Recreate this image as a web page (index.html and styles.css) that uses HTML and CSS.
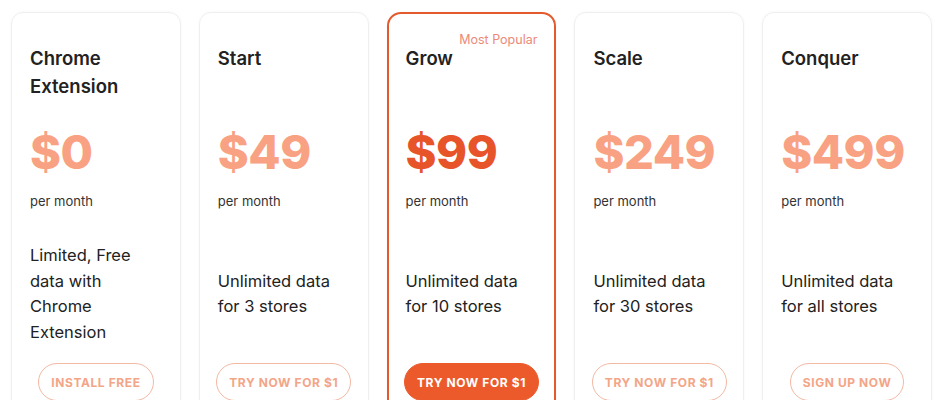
FILE: index.html
```html
<!DOCTYPE html>
<html lang="en">
<head>
    <meta charset="UTF-8">
    <meta name="viewport" content="width=device-width, initial-scale=1.0">
    <title>Pricing</title>
    <link rel="stylesheet" href="styles.css">
</head>
<body>
    <div class="plans">
        <div class="plan">
            <h3 class="plan-name">Chrome Extension</h3>
            <div class="price">$0</div>
            <div class="period">per month</div>
            <div class="desc"><p>Limited, Free data with Chrome Extension</p></div>
            <button class="btn">Install Free</button>
        </div>

        <div class="plan">
            <h3 class="plan-name">Start</h3>
            <div class="price">$49</div>
            <div class="period">per month</div>
            <div class="desc"><p>Unlimited data for 3 stores</p></div>
            <button class="btn">Try now for $1</button>
        </div>

        <div class="plan popular">
            <span class="badge">Most Popular</span>
            <h3 class="plan-name">Grow</h3>
            <div class="price">$99</div>
            <div class="period">per month</div>
            <div class="desc"><p>Unlimited data for 10 stores</p></div>
            <button class="btn btn-solid">Try now for $1</button>
        </div>

        <div class="plan">
            <h3 class="plan-name">Scale</h3>
            <div class="price">$249</div>
            <div class="period">per month</div>
            <div class="desc"><p>Unlimited data for 30 stores</p></div>
            <button class="btn">Try now for $1</button>
        </div>

        <div class="plan">
            <h3 class="plan-name">Conquer</h3>
            <div class="price">$499</div>
            <div class="period">per month</div>
            <div class="desc"><p>Unlimited data for all stores</p></div>
            <button class="btn">Sign up now</button>
        </div>
    </div>
</body>
</html>
```

FILE: styles.css
```css
body {
    margin: 0;
    font-family: Inter, "Open Sans", sans-serif;
    background: #fff;
    color: #222;
    overflow: hidden;
}
.plans {
    display: grid;
    grid-template-columns: repeat(5, minmax(0, 1fr));
    gap: 18px;
    padding: 12px 11px 0;
}
.plan {
    position: relative;
    display: flex;
    flex-direction: column;
    height: 420px;
    padding: 31px 18px 0;
    border: 1px solid #efefef;
    border-radius: 12px;
    box-shadow: 0 0 3px rgba(0, 0, 0, 0.04);
}
.plan.popular {
    border: 2px solid #e35a2d;
    padding: 30px 17px 0;
    border-radius: 14px;
}
.badge {
    position: absolute;
    top: 18px;
    right: 17px;
    font-size: 12.5px;
    color: #ec8a7a;
}
.plan-name {
    margin: 0;
    height: 78px;
    font-size: 18.5px;
    font-weight: 600;
    line-height: 28px;
    color: #222;
}
.price {
    height: 60px;
    font-size: 47px;
    font-weight: 800;
    line-height: 60px;
    color: #f9a283;
    letter-spacing: -0.5px;
}
.popular .price {
    color: #e8542a;
}
.period {
    margin-top: 9px;
    font-size: 13px;
    line-height: 20px;
    color: #333;
}
.desc {
    display: flex;
    align-items: center;
    height: 136px;
    margin-top: 15px;
}
.desc p {
    margin: 0;
    font-size: 16.5px;
    line-height: 25.5px;
    color: #222;
}
.btn {
    align-self: center;
    margin-top: 1px;
    padding: 0 12px;
    height: 38px;
    border: 1.5px solid #f2b9a3;
    border-radius: 20px;
    background: #fff;
    color: #f3a587;
    font-family: inherit;
    font-size: 12px;
    font-weight: 700;
    letter-spacing: 0.6px;
    text-transform: uppercase;
    white-space: nowrap;
    cursor: pointer;
}
.btn-solid {
    background: #ec5a2b;
    border-color: #ec5a2b;
    color: #fff;
}
```
